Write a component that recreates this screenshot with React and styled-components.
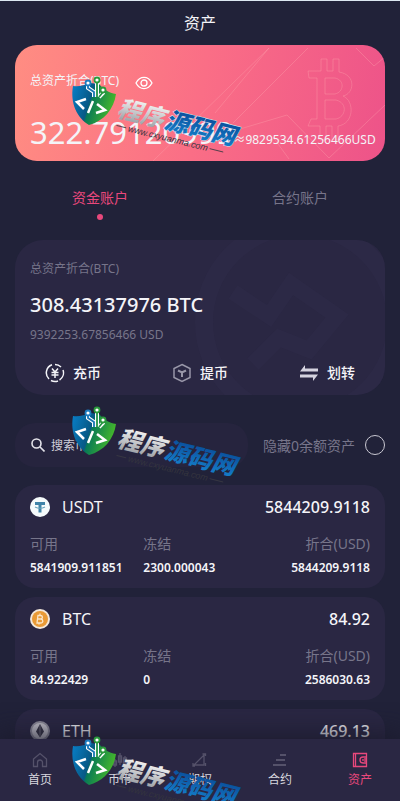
import React from "react";
import styled, { createGlobalStyle, ThemeProvider } from "styled-components";

const theme = {
    colors: {
        page: "#212239",
        panel: "#2a2743",
        accent: "#e8487c",
        muted: "#77758a",
        text: "#f4f4f8",
    },
}

const coins = [
    {name: "USDT", total: "5844209.9118", free: "5841909.911851", frozen: "2300.000043", usd: "5844209.9118"},
    {name: "BTC", total: "84.92", free: "84.922429", frozen: "0", usd: "2586030.63"},
    {name: "ETH", total: "469.13"},
]

const tabs = [
    {id: "home", label: "首页"},
    {id: "spot", label: "币币"},
    {id: "option", label: "期权"},
    {id: "contract", label: "合约"},
    {id: "assets", label: "资产"},
]

const App = () => {
    return (
        <ThemeProvider theme={theme}>
            <GlobalStyle/>
            <Page>
                <Header>资产</Header>
                <Main>
                    <TotalCard>
                        <CardLines/>
                        <TotalLabel>
                            总资产折合(BTC)
                            <EyeButton type="button" aria-label="显示或隐藏"><EyeIcon/></EyeButton>
                        </TotalLabel>
                        <TotalRow>
                            <TotalValue>322.79120999</TotalValue>
                            <TotalUsd>≈9829534.61256466USD</TotalUsd>
                        </TotalRow>
                    </TotalCard>

                    <Accounts>
                        <AccountTab type="button" $active>资金账户</AccountTab>
                        <AccountTab type="button">合约账户</AccountTab>
                    </Accounts>

                    <Panel>
                        <PanelArt/>
                        <PanelLabel>总资产折合(BTC)</PanelLabel>
                        <PanelValue>308.43137976 BTC</PanelValue>
                        <PanelLabel>9392253.67856466 USD</PanelLabel>
                        <Actions>
                            <Action type="button"><DepositIcon/>充币</Action>
                            <Action type="button"><WithdrawIcon/>提币</Action>
                            <Action type="button"><TransferIcon/>划转</Action>
                        </Actions>
                    </Panel>

                    <Filters>
                        <SearchBox>
                            <SearchIcon/>
                            <SearchInput type="text" placeholder="搜索币种" aria-label="搜索币种"/>
                        </SearchBox>
                        <HideZero>
                            隐藏0余额资产
                            <Radio type="checkbox"/>
                        </HideZero>
                    </Filters>

                    <CoinList>
                        {coins.map(coin => <Coin key={coin.name} coin={coin}/>)}
                    </CoinList>
                </Main>

                <Nav>
                    {tabs.map(tab => (
                        <NavLink key={tab.id} href={`#${tab.id}`} $active={tab.id === "assets"}>
                            <NavIcon id={tab.id}/>
                            {tab.label}
                        </NavLink>
                    ))}
                </Nav>

                <Watermark $top={70} outline/>
                <Watermark $top={400}/>
                <Watermark $top={730}/>
            </Page>
        </ThemeProvider>
    )
}

export default App;

const Coin = ({coin}) => (
    <CoinCard>
        <CoinHead>
            <CoinLogo name={coin.name}/>
            <CoinName>{coin.name}</CoinName>
            <CoinTotal>{coin.total}</CoinTotal>
        </CoinHead>
        {coin.free && (
            <CoinGrid>
                <Cell><dt>可用</dt><dd>{coin.free}</dd></Cell>
                <Cell><dt>冻结</dt><dd>{coin.frozen}</dd></Cell>
                <Cell $right><dt>折合(USD)</dt><dd>{coin.usd}</dd></Cell>
            </CoinGrid>
        )}
    </CoinCard>
)

const CoinLogo = ({name}) => {
    if (name === "USDT") {
        return (
            <svg width="20" height="20" viewBox="0 0 20 20">
                <circle cx="10" cy="10" r="10" fill="#f5fafb"/>
                <path d="M5 5h10v3h-3.500v7.500h-3V8H5z" fill="#3f83a8"/>
                <path d="M5 10c3 1.500 7 1.500 10 0" fill="none" stroke="#69a5bd" strokeWidth="1.200"/>
            </svg>
        )
    }
    if (name === "BTC") {
        return (
            <svg width="20" height="20" viewBox="0 0 20 20">
                <circle cx="10" cy="10" r="10" fill="#f3e8dc"/>
                <circle cx="10" cy="10" r="8" fill="#e99a36"/>
                <path d="M8 6l-1 8h3.500c3 0 3-3.500.5-4 2-.5 2-3.500-.5-3.500H7.500M7.500 10H11M10 4.500v2M9 14v1.500" fill="none" stroke="#fbe6c8" strokeWidth="1.300"/>
            </svg>
        )
    }
    return (
        <svg width="20" height="20" viewBox="0 0 20 20">
            <circle cx="10" cy="10" r="10" fill="#8f8d9b"/>
            <circle cx="10" cy="10" r="8" fill="#c3c1ca"/>
            <path d="M10 3l4 7.500-4 6-4-6z" fill="#353343"/>
            <path d="M10 4v12" stroke="#6f6d7b"/>
        </svg>
    )
}

const EyeIcon = () => (
    <svg width="18" height="14" viewBox="0 0 18 14" fill="none" stroke="#fff" strokeWidth="1.300">
        <path d="M1 7c4-7.500 12-7.500 16 0-4 7.500-12 7.500-16 0z"/>
        <circle cx="9" cy="7" r="3"/>
    </svg>
)

const DepositIcon = () => (
    <svg width="20" height="20" viewBox="0 0 20 20" fill="none" stroke="currentColor" strokeWidth="1.500">
        <path d="M7 1.800A8.500 8.500 0 0 0 4 16M6 17.500A8.500 8.500 0 0 0 13 18M14.500 17A8.500 8.500 0 0 0 18 7M16 4A8.500 8.500 0 0 0 10 1.500"/>
        <path d="M7 5.500l3 3.500 3-3.500M6.500 9.500h7M6.500 12h7M10 9v6"/>
    </svg>
)

const WithdrawIcon = () => (
    <svg width="20" height="20" viewBox="0 0 20 20" fill="none" stroke="#9896a8" strokeWidth="1.500">
        <path d="M10 1.500l8 4v9l-8 4-8-4v-9z"/>
        <path d="M6 7.500l4 2 4-2M10 9.500V14" strokeWidth="2"/>
    </svg>
)

const TransferIcon = () => (
    <svg width="20" height="20" viewBox="0 0 20 20" fill="#d5d3df">
        <path d="M6 2v3.500h13v3H1zM1 11.500h18L14 18v-3.500H1z"/>
    </svg>
)

const SearchIcon = () => (
    <svg width="14" height="14" viewBox="0 0 14 14" fill="none" stroke="#e4e3ea" strokeWidth="1.600">
        <circle cx="5.500" cy="5.500" r="4.500"/>
        <path d="M9 9l4.500 4.500"/>
    </svg>
)

const navPaths = {
    home: <path d="M1.500 7L8 1.500 14.500 7v7.500h-4v-4a2.500 2.500 0 0 0-5 0v4h-4z"/>,
    spot: <path d="M3 7v8M1.500 9h3v4h-3zM8 1v12M6.500 4h3v6h-3zM13 4v10M11.500 6h3v5h-3z"/>,
    option: <path d="M2 13L12 3v10zM10.500 2h3v2M1 11v3h2M13.500 11v3"/>,
    contract: <path d="M8 3h6M4 8h9M1 13h13" strokeWidth="2"/>,
    assets: <path d="M1.500 1.500h13v13h-13zM14.500 5H11a3 3 0 0 0 0 6h3.500M11 7v2M13 6v4M3.500 1.500v13"/>,
}

const NavIcon = ({id}) => (
    <svg width="16" height="16" viewBox="0 0 16 16" fill="none" stroke={id === "assets" ? "#e8487c" : "#55526a"} strokeWidth="1.300">
        {navPaths[id]}
    </svg>
)

const CardLines = () => (
    <Art viewBox="0 0 370 116" fill="none" stroke="#ffa5b0" strokeOpacity="0.35">
        <path d="M138 116L254 3M200 68L254 3M218 78L293 3"/>
        <path d="M225 84L272 70 314 113 370 60M258 92l16 22M341 3l18 18 11-9"/>
        <path d="M293 26h13V14h6v12h6V14h6v13c18 3 15 22 4 24 12 5 11 28-5 30v14h-6V81h-6v14h-6V81h-12l3-7h6V33h-8zM310 33h10c10 2 9 14 0 16h-10zM310 55h11c12 3 10 17 0 19h-11z"/>
    </Art>
)

const PanelArt = () => (
    <Art viewBox="0 0 370 155" fill="none" stroke="#343050" strokeOpacity="0.25">
        <circle cx="285" cy="82" r="96" strokeWidth="18"/>
        <path d="M218 52l36 24 22-32 46 32-28 34-30-12-26 26" strokeWidth="16"/>
    </Art>
)

const Watermark = ({$top, outline}) => {
    const blue = `blue${$top}`
    const green = `green${$top}`
    const silver = `silver${$top}`
    return (
        <Mark $top={$top} viewBox="65 70 190 95" aria-hidden="true">
            <defs>
                <linearGradient id={green} x1="0" y1="0" x2="1" y2="0.300">
                    <stop offset="0" stopColor="#087fc9"/>
                    <stop offset="0.480" stopColor="#075985"/>
                    <stop offset="0.520" stopColor="#087a55"/>
                    <stop offset="1" stopColor="#43b52c"/>
                </linearGradient>
                <linearGradient id={silver} x1="0" y1="0" x2="0" y2="1">
                    <stop offset="0.200" stopColor="#f4f4f4"/>
                    <stop offset="1" stopColor="#8d9299"/>
                </linearGradient>
                <linearGradient id={blue} x1="0" y1="0" x2="0" y2="1">
                    <stop offset="0.200" stopColor="#0a4f9c"/>
                    <stop offset="1" stopColor="#1685d0"/>
                </linearGradient>
            </defs>
            <path d="M73 86c6 1 12-1 17-3l9 1c4 5 10 9 17 10-2 15-12 27-27 31-12-7-19-22-16-39z" fill={`url(#${green})`}/>
            <g fill="none" stroke="#fff" strokeWidth="4">
                <path d="M88 83v5l6 4v5M97 80v17M103 89v4l-4 4"/>
            </g>
            <g fill="none" strokeWidth="1.800">
                <path d="M88 85v3l6 4v5" stroke="#1976b5"/>
                <path d="M97 82v15M103 92l-4 5" stroke="#239447"/>
            </g>
            <g fill="#fff" strokeWidth="1.800">
                <circle cx="88" cy="83" r="2.500" stroke="#1c7cc0"/>
                <circle cx="97" cy="80" r="2.500" stroke="#2a9a3c"/>
                <circle cx="103" cy="90" r="2.500" stroke="#2a9a3c"/>
            </g>
            <path d="M86 99l-9 3 7 7M97 104l8 6-9 3M93 101l-5 12" fill="none" stroke="#fff" strokeWidth="2.500"/>
            <g transform="rotate(14 116 115)">
                <MarkName x="116" y="116" fill={`url(#${silver})`}>程序</MarkName>
                <MarkName x="165" y="116" fill={`url(#${blue})`} stroke={outline ? "#d5e4f2" : "none"} strokeWidth="1" paintOrder="stroke">源码网</MarkName>
                <MarkUrl x="131" y="128">www.cxyuanma.com</MarkUrl>
                <path d="M119 125h10M215 125h14" stroke="#393943" strokeWidth="0.800"/>
            </g>
        </Mark>
    )
}

const GlobalStyle = createGlobalStyle`
    * {
        box-sizing: border-box;
    }
    body {
        margin: 0;
        background-color: #212239;
        font-family: "Noto Sans", "Noto Sans CJK SC", sans-serif;
    }
    button, input {
        font-family: inherit;
    }
    button {
        border: 0;
        padding: 0;
        background: none;
        cursor: pointer;
    }
    svg {
        flex-shrink: 0;
    }
`

const Page = styled.div`
    position: relative;
    display: flex;
    flex-direction: column;
    height: 100vh;
    overflow: hidden;
    border-top: 1px solid #dce8f2;
    color: ${props => props.theme.colors.text};
    background-color: ${props => props.theme.colors.page};
`

const Header = styled.h1`
    flex-shrink: 0;
    margin: 0;
    font-size: 16px;
    font-weight: 400;
    line-height: 44px;
    text-align: center;
`

const Main = styled.main`
    flex: 1;
    min-height: 0;
    padding: 0 15px;
    overflow-y: auto;
    scrollbar-width: none;
`

const Art = styled.svg`
    position: absolute;
    top: 0;
    right: 0;
    width: 100%;
    height: 100%;
    z-index: -1;
`

const TotalCard = styled.section`
    position: relative;
    z-index: 0;
    height: 116px;
    padding: 24px 11px 0 15px;
    overflow: hidden;
    border-radius: 22px;
    background: linear-gradient(100deg, #ff8d82, #fa6e86 50%, #ed5389);
`

const TotalLabel = styled.div`
    display: flex;
    align-items: center;
    gap: 16px;
    font-size: 12px;
    line-height: 24px;
`

const EyeButton = styled.button`
    display: flex;
    padding-top: 4px;
`

const TotalRow = styled.div`
    display: flex;
    align-items: baseline;
    justify-content: space-between;
    padding-top: 17px;
    line-height: 44px;
    white-space: nowrap;
`

const TotalValue = styled.span`
    font-size: 31px;
`

const TotalUsd = styled.span`
    font-size: 12px;
`

const Accounts = styled.div`
    display: flex;
    margin: 0 -15px;
    padding: 25px 0 20px;
`

const AccountTab = styled.button`
    flex: 1;
    display: flex;
    flex-direction: column;
    align-items: center;
    gap: 4px;
    font-size: 14px;
    line-height: 24px;
    color: ${props => props.$active ? props.theme.colors.accent : props.theme.colors.muted};
    &::after {
        content: "";
        width: 6px;
        height: 6px;
        border-radius: 50%;
        background-color: ${props => props.$active ? props.theme.colors.accent : "transparent"};
    }
`

const Panel = styled.section`
    position: relative;
    z-index: 0;
    height: 155px;
    padding: 17px 15px 0;
    overflow: hidden;
    border-radius: 28px;
    background-color: ${props => props.theme.colors.panel};
`

const PanelLabel = styled.div`
    font-size: 12px;
    line-height: 24px;
    color: ${props => props.theme.colors.muted};
`

const PanelValue = styled.div`
    padding: 8px 0 2px;
    font-size: 20px;
    font-weight: 500;
    line-height: 32px;
`

const Actions = styled.div`
    display: flex;
    justify-content: space-between;
    padding: 14px 15px 0;
`

const Action = styled.button`
    display: flex;
    align-items: center;
    gap: 8px;
    font-size: 14px;
    font-weight: 500;
    line-height: 24px;
    color: ${props => props.theme.colors.text};
`

const Filters = styled.div`
    display: flex;
    align-items: center;
    justify-content: space-between;
    gap: 15px;
    padding: 28px 0 18px;
`

const SearchBox = styled.label`
    flex: 1;
    display: flex;
    align-items: center;
    gap: 6px;
    height: 44px;
    min-width: 0;
    padding: 0 16px;
    border-radius: 20px;
    background-color: #26243e;
`

const SearchInput = styled.input`
    flex: 1;
    min-width: 0;
    border: 0;
    padding: 0;
    outline: none;
    background: none;
    font-size: 12px;
    color: inherit;
    &::placeholder {
        color: #d0ced9;
    }
`

const HideZero = styled.label`
    display: flex;
    align-items: center;
    gap: 10px;
    font-size: 14px;
    white-space: nowrap;
    color: ${props => props.theme.colors.muted};
`

const Radio = styled.input`
    appearance: none;
    width: 20px;
    height: 20px;
    margin: 0;
    border: 1px solid #c9c8d2;
    border-radius: 50%;
    &:checked {
        background-color: ${props => props.theme.colors.accent};
    }
`

const CoinList = styled.div`
    display: flex;
    flex-direction: column;
    gap: 9px;
`

const CoinCard = styled.article`
    min-height: 103px;
    padding: 10px 15px 9px;
    border-radius: 20px;
    background-color: ${props => props.theme.colors.panel};
`

const CoinHead = styled.div`
    display: flex;
    align-items: center;
    font-size: 16px;
    line-height: 24px;
`

const CoinName = styled.span`
    flex: 1;
    padding-left: 12px;
`

const CoinTotal = styled.span`
    font-weight: 500;
`

const CoinGrid = styled.dl`
    display: grid;
    grid-template-columns: repeat(3, 1fr);
    margin: 0;
    padding-top: 13px;
`

const Cell = styled.div`
    text-align: ${props => props.$right ? "right" : "left"};
    dt {
        font-size: 14px;
        line-height: 24px;
        color: ${props => props.theme.colors.muted};
    }
    dd {
        margin: 0;
        font-size: 12px;
        font-weight: 600;
        line-height: 23px;
    }
`

const Nav = styled.nav`
    position: relative;
    flex-shrink: 0;
    display: flex;
    height: 62px;
    padding-top: 13px;
    background-color: ${props => props.theme.colors.panel};
    box-shadow: 0 0 28px 4px rgba(26, 25, 42, 0.9);
`

const NavLink = styled.a`
    flex: 1;
    display: flex;
    flex-direction: column;
    align-items: center;
    gap: 3px;
    font-size: 12px;
    line-height: 18px;
    text-decoration: none;
    color: ${props => props.$active ? props.theme.colors.accent : "#d8d7df"};
`

const Mark = styled.svg`
    position: absolute;
    top: ${props => props.$top - 1}px;
    left: 65px;
    width: 190px;
    height: 95px;
    pointer-events: none;
`

const MarkName = styled.text`
    font-family: "Noto Sans CJK SC", sans-serif;
    font-size: 24px;
    font-style: italic;
    font-weight: 900;
`

const MarkUrl = styled.text`
    font-family: "Liberation Sans", sans-serif;
    font-size: 9px;
    font-style: italic;
    fill: #34343e;
`
